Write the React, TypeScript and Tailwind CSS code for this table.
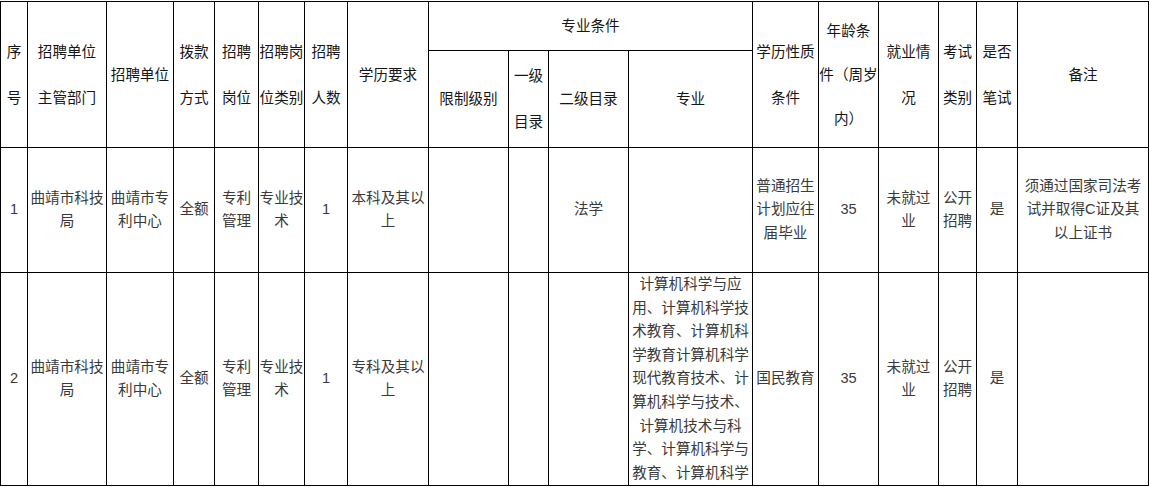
// App.tsx
import React from "react";

type Row = {
  no: string;
  dept: string[];
  unit: string[];
  fund: string;
  post: string[];
  postType: string[];
  count: string;
  edu: string[];
  level2: string;
  majors: string[];
  eduType: string[];
  age: string;
  job: string[];
  exam: string[];
  written: string;
  note: string[];
  height: string;
};

const rows: Row[] = [
  {
    no: "1",
    dept: ["曲靖市科技", "局"],
    unit: ["曲靖市专", "利中心"],
    fund: "全额",
    post: ["专利", "管理"],
    postType: ["专业技", "术"],
    count: "1",
    edu: ["本科及其以", "上"],
    level2: "法学",
    majors: [],
    eduType: ["普通招生", "计划应往", "届毕业"],
    age: "35",
    job: ["未就过", "业"],
    exam: ["公开", "招聘"],
    written: "是",
    note: ["须通过国家司法考", "试并取得C证及其", "以上证书"],
    height: "h-[125px]",
  },
  {
    no: "2",
    dept: ["曲靖市科技", "局"],
    unit: ["曲靖市专", "利中心"],
    fund: "全额",
    post: ["专利", "管理"],
    postType: ["专业技", "术"],
    count: "1",
    edu: ["专科及其以", "上"],
    level2: "",
    majors: [
      "计算机科学与应",
      "用、计算机科学技",
      "术教育、计算机科",
      "学教育计算机科学",
      "现代教育技术、计",
      "算机科学与技术、",
      "计算机技术与科",
      "学、计算机科学与",
      "教育、计算机科学",
    ],
    eduType: ["国民教育"],
    age: "35",
    job: ["未就过", "业"],
    exam: ["公开", "招聘"],
    written: "是",
    note: [],
    height: "h-[213px]",
  },
];

const colWidths = [
  "w-[27px]", "w-[79px]", "w-[67px]", "w-[41px]", "w-[44px]", "w-[46px]",
  "w-[43px]", "w-[81px]", "w-[80px]", "w-[40px]", "w-[80px]", "w-[124px]",
  "w-[66px]", "w-[60px]", "w-[60px]", "w-[38px]", "w-[41px]", "w-[131px]",
];

function Lines({ lines }: { lines: string[] }) {
  return (
    <>
      {lines.map((l, i) => (
        <div key={i} className="whitespace-nowrap">
          {l}
        </div>
      ))}
    </>
  );
}

const th = "border border-black p-0 text-center align-middle font-normal leading-[46px] text-[#161616]";
const td = "border border-black p-0 text-center align-middle leading-[23.5px] text-[#3a3a3a]";

export default function App() {
  return (
    <div className="min-h-screen bg-white pt-px font-['Liberation_Sans','Noto_Sans_CJK_SC',sans-serif] text-[14.6px]">
      <table className="w-[1149px] table-fixed border-collapse">
        <colgroup>
          {colWidths.map((w, i) => (
            <col key={i} className={w} />
          ))}
        </colgroup>
        <thead>
          <tr className="h-[49px]">
            <th rowSpan={2} className={th}><Lines lines={["序", "号"]} /></th>
            <th rowSpan={2} className={th}><Lines lines={["招聘单位", "主管部门"]} /></th>
            <th rowSpan={2} className={th}>招聘单位</th>
            <th rowSpan={2} className={th}><Lines lines={["拨款", "方式"]} /></th>
            <th rowSpan={2} className={th}><Lines lines={["招聘", "岗位"]} /></th>
            <th rowSpan={2} className={th}><Lines lines={["招聘岗", "位类别"]} /></th>
            <th rowSpan={2} className={th}><Lines lines={["招聘", "人数"]} /></th>
            <th rowSpan={2} className={th}>学历要求</th>
            <th colSpan={4} className={th}>专业条件</th>
            <th rowSpan={2} className={th}><Lines lines={["学历性质", "条件"]} /></th>
            <th rowSpan={2} className={`${th} !leading-[44px]`}>
              <Lines lines={["年龄条", "件（周岁", "内）"]} />
            </th>
            <th rowSpan={2} className={th}><Lines lines={["就业情", "况"]} /></th>
            <th rowSpan={2} className={th}><Lines lines={["考试", "类别"]} /></th>
            <th rowSpan={2} className={th}><Lines lines={["是否", "笔试"]} /></th>
            <th rowSpan={2} className={th}>备注</th>
          </tr>
          <tr className="h-[97px]">
            <th className={th}>限制级别</th>
            <th className={th}><Lines lines={["一级", "目录"]} /></th>
            <th className={th}>二级目录</th>
            <th className={th}>专业</th>
          </tr>
        </thead>
        <tbody>
          {rows.map((r) => (
            <tr key={r.no} className={r.height}>
              <td className={td}>{r.no}</td>
              <td className={td}><Lines lines={r.dept} /></td>
              <td className={td}><Lines lines={r.unit} /></td>
              <td className={td}>{r.fund}</td>
              <td className={td}><Lines lines={r.post} /></td>
              <td className={td}><Lines lines={r.postType} /></td>
              <td className={td}>{r.count}</td>
              <td className={td}><Lines lines={r.edu} /></td>
              <td className={td}></td>
              <td className={td}></td>
              <td className={td}>{r.level2}</td>
              <td className={`${td} !align-top`}>
                {r.majors.length > 0 && (
                  <div className="h-[212px] overflow-hidden leading-[23.6px]">
                    <Lines lines={r.majors} />
                  </div>
                )}
              </td>
              <td className={td}><Lines lines={r.eduType} /></td>
              <td className={td}>{r.age}</td>
              <td className={td}><Lines lines={r.job} /></td>
              <td className={td}><Lines lines={r.exam} /></td>
              <td className={td}>{r.written}</td>
              <td className={td}><Lines lines={r.note} /></td>
            </tr>
          ))}
        </tbody>
      </table>
    </div>
  );
}
